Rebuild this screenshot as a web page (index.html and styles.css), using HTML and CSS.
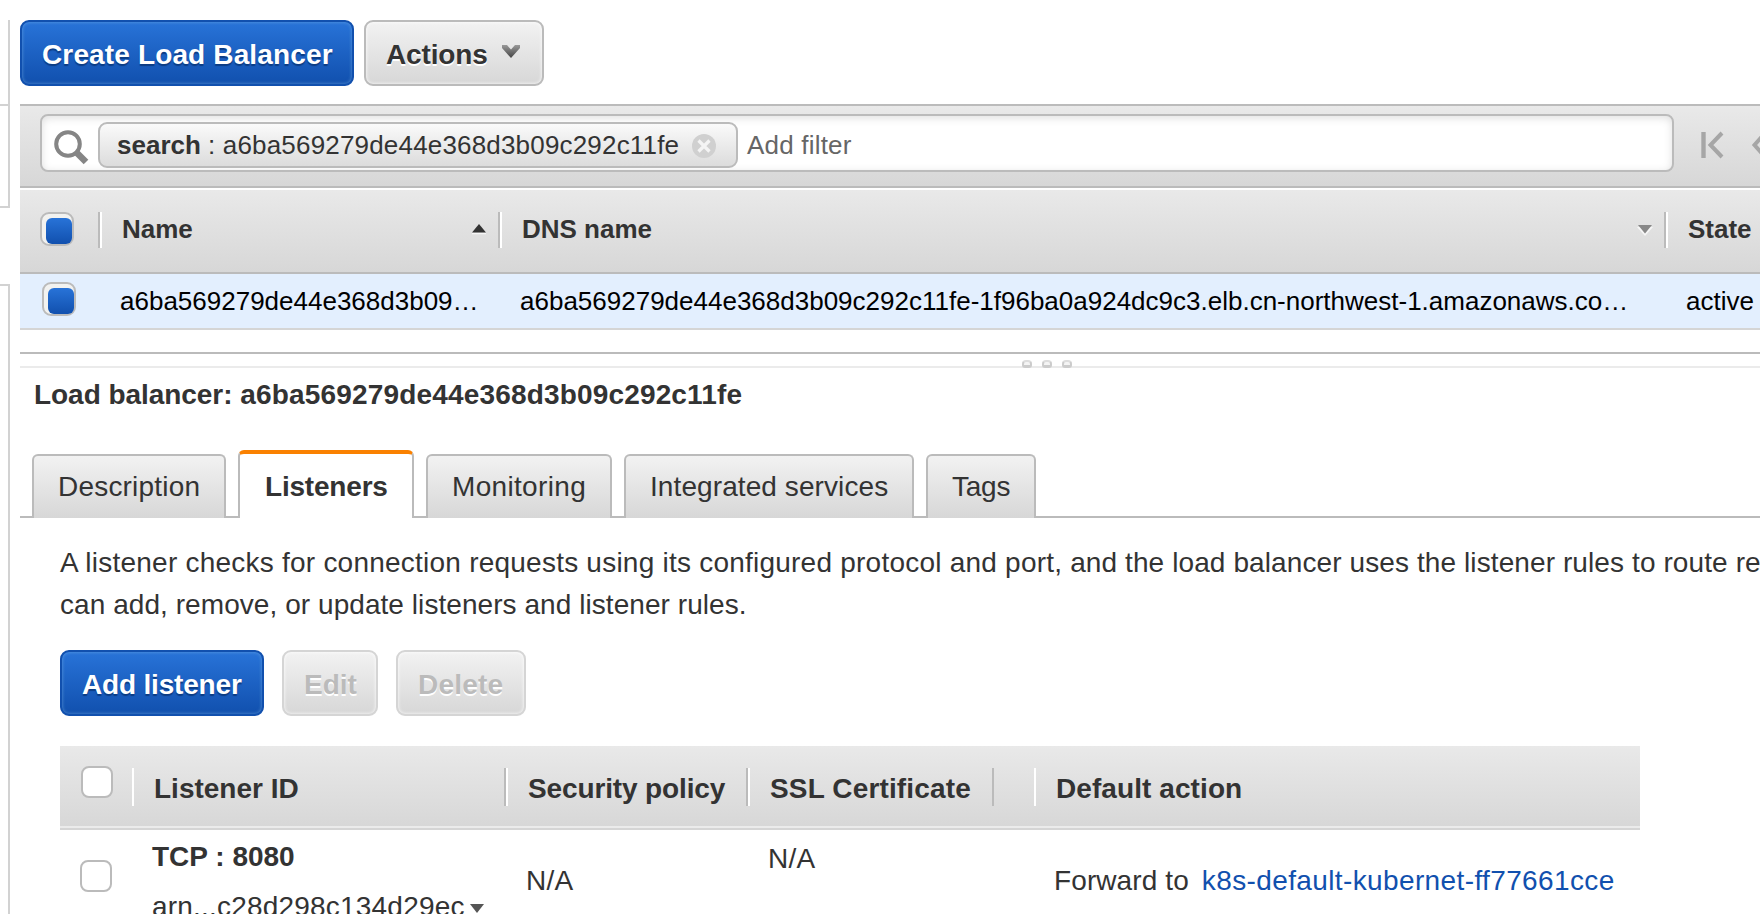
FILE: index.html
```html
<!DOCTYPE html>
<html lang="en">
<head>
<meta charset="utf-8">
<title>Load Balancers</title>
<link rel="stylesheet" href="styles.css">
</head>
<body>
<div class="app">
  <aside class="sidebar">
    <div class="side-top"></div>
    <div class="side-mid"></div>
    <div class="side-bottom"></div>
  </aside>
  <main class="main">
    <div class="actions">
      <button class="btn primary create"><span class="t">Create Load Balancer</span></button>
      <button class="btn menu"><span class="t">Actions</span>
        <svg class="chev" width="20" height="15" viewBox="0 0 20 15"><defs><linearGradient id="cg" x1="0" y1="0" x2="0" y2="1"><stop offset="0" stop-color="#999"/><stop offset="1" stop-color="#444"/></linearGradient></defs><path d="M1 1H6L10 5.5L14 1H19V4L10 14L1 4Z" fill="url(#cg)"/></svg>
      </button>
    </div>
    <div class="filterbar">
      <div class="searchbox">
        <svg class="lens" width="36" height="36" viewBox="0 0 36 36" fill="none" stroke="#858585"><circle cx="14" cy="14" r="11.8" stroke-width="4"/><path d="M22.5 22.5L32 32" stroke-width="6.5"/></svg>
        <div class="token"><span class="t key">search</span><span class="t val">: a6ba569279de44e368d3b09c292c11fe</span>
          <svg class="clear" width="24" height="24" viewBox="0 0 24 24"><circle cx="12" cy="12" r="12" fill="#d0d0d0"/><path d="M6.5 6.5L17.5 17.5M17.5 6.5L6.5 17.5" stroke="#f4f4f4" stroke-width="3.2"/></svg>
        </div>
        <span class="t hint">Add filter</span>
      </div>
      <svg class="pager" width="60" height="28" viewBox="0 0 60 28" fill="none" stroke="#a6a6a6"><path d="M2.5 1V27" stroke-width="4.4"/><path d="M21 2L9.500 14L21 26" stroke-width="4"/><path d="M65 1L53.500 14L65 27" stroke-width="4"/></svg>
    </div>
    <div class="grid-head">
      <div class="h-check"><span class="check on"></span></div>
      <div class="h-name"><span class="t">Name</span><svg width="16" height="12" viewBox="0 0 16 12"><path d="M1 10.500H15" stroke="#f6f6f6" stroke-width="1.500"/><path d="M8 1L15 9.500H1Z" fill="#333"/></svg></div>
      <div class="h-dns"><span class="t">DNS name</span><svg width="16" height="12" viewBox="0 0 16 12"><path d="M0 3H16L8 12Z" fill="#f6f6f6"/><path d="M1 1H15L8 9.500Z" fill="#888"/></svg></div>
      <div class="h-state"><span class="t">State</span></div>
    </div>
    <div class="grid-row">
      <span class="check on"></span>
      <span class="t r-name">a6ba569279de44e368d3b09…</span>
      <span class="t r-dns">a6ba569279de44e368d3b09c292c11fe-1f96ba0a924dc9c3.elb.cn-northwest-1.amazonaws.co…</span>
      <span class="t r-state">active</span>
    </div>
    <div class="splitter"><i></i><i></i><i></i></div>
    <h2 class="title"><span class="t label">Load balancer: </span><span class="t">a6ba569279de44e368d3b09c292c11fe</span></h2>
    <nav class="tabs">
      <a class="tab t1"><span class="t">Description</span></a>
      <a class="tab t2 active"><span class="t">Listeners</span></a>
      <a class="tab t3"><span class="t">Monitoring</span></a>
      <a class="tab t4"><span class="t">Integrated services</span></a>
      <a class="tab t5"><span class="t">Tags</span></a>
    </nav>
    <section class="panel">
      <p class="intro"><span class="t lead">A listener checks for connection requests using its configured protocol and port,</span><span class="t rest"> and the load balancer uses the listener rules to route requests</span><br><span class="t last">can add, remove, or update listeners and listener rules.</span></p>
      <div class="actions lower">
        <button class="btn primary add"><span class="t">Add listener</span></button>
        <button class="btn off edit"><span class="t">Edit</span></button>
        <button class="btn off delete"><span class="t">Delete</span></button>
      </div>
      <div class="cols l-head">
        <div class="l-check"><span class="check"></span></div>
        <div class="sep-l sep-r"><span class="t">Listener ID</span></div>
        <div class="sep-l sep-r h-pol"><span class="t">Security policy</span></div>
        <div class="sep-l sep-r h-ssl"><span class="t">SSL Certificate</span></div>
        <div></div>
        <div class="sep-l h-act"><span class="t">Default action</span></div>
      </div>
      <div class="cols l-row">
        <div class="l-check"><span class="check"></span></div>
        <div class="c-id"><b class="t">TCP : 8080</b><div class="arn"><span class="t">arn...c28d298c134d29ec</span><svg width="14" height="9" viewBox="0 0 14 9"><path d="M0 0H14L7 9Z" fill="#555"/></svg></div></div>
        <div class="c-pol"><span class="t">N/A</span></div>
        <div class="c-ssl"><span class="t">N/A</span></div>
        <div></div>
        <div class="c-act"><span class="t">Forward to</span><a class="t link">k8s-default-kubernet-ff77661cce</a></div>
      </div>
    </section>
  </main>
</div>
</body>
</html>
```

FILE: styles.css
```css
* { box-sizing: border-box; }
html, body { margin: 0; height: 914px; overflow: hidden; background: #fff; }
body { font: 28px/42px "Liberation Sans", Arial, sans-serif; color: #333; }
.t { white-space: pre; }
svg { display: block; flex: none; }
.app { display: flex; width: 1760px; height: 914px; padding-top: 20px; overflow: hidden; }
.sidebar { width: 10px; flex: none; margin-right: 10px; }
.side-top { height: 86px; border: solid #d2d2d2; border-width: 0 2px 2px 0; }
.side-mid { height: 102px; border: solid #d2d2d2; border-width: 0 2px 2px 0; }
.side-bottom { height: 640px; margin-top: 76px; border: solid #d2d2d2; border-width: 2px 2px 0 0; }
.main { width: 1740px; flex: none; }

.actions { display: flex; gap: 10px; height: 84px; }
.btn { display: flex; align-items: center; height: 66px; padding: 4px 0 0 20px; border: 2px solid #bbb; border-radius: 9px; font: bold 28px/42px "Liberation Sans", Arial, sans-serif; color: #333; text-shadow: 0 2px 0 #fff; background: linear-gradient(#f2f2f2, #d7d7d7); box-shadow: inset 0 0 3px 1px rgba(255,255,255,.6); }
.btn.primary { color: #fff; border-color: #1150ae; background: linear-gradient(#2873d8, #1150ae); text-shadow: 0 2px 1px #0c3c84; box-shadow: inset 0 0 3px 1px rgba(120,180,230,.4); }
.btn.off { color: #bbb; border-color: #d5d5d5; }
.create { width: 334px; letter-spacing: .14px; }
.menu { width: 180px; letter-spacing: -.16px; }
.chev { margin: -7px 0 0 13px; }

.filterbar { display: flex; height: 84px; padding: 8px 0 0 20px; border: solid #bbb; border-width: 2px 0; background: linear-gradient(#e9e9e9, #d7d7d7); }
.searchbox { display: flex; width: 1634px; height: 58px; flex: none; border: 2px solid #bbb; border-radius: 8px; background: #fff; box-shadow: inset 0 2px 8px rgba(0,0,0,.13); font-size: 26px; line-height: 42px; }
.lens { margin: 14px 8px 0 12px; }
.token { display: flex; width: 640px; height: 46px; margin-top: 6px; padding: 0 0 0 17px; border: 2px solid #bbb; border-radius: 9px; background: linear-gradient(#fafafa, #dcdcdc); }
.key { font-weight: bold; width: 91px; }
.val { letter-spacing: .18px; }
.clear { margin: 10px 0 0 13px; }
.hint { margin: 8px 0 0 9px; color: #666; letter-spacing: .2px; }
.pager { margin: 17px 0 0 27px; }

.grid-head { display: flex; height: 86px; border-top: 2px solid #fff; border-bottom: 2px solid #bbb; background: linear-gradient(#e9e9e9, #d7d7d7) padding-box; font-weight: bold; font-size: 26px; padding-top: 22px; }
.grid-head > div { display: flex; height: 36px; }
.grid-head > div + div { border-left: 2px solid #fff; padding: 0 11px 0 20px; justify-content: space-between; line-height: 35px; }
.h-check { width: 80px; padding-left: 20px; border-right: 2px solid #bbb; }
.h-name { width: 400px; border-right: 2px solid #bbb; }
.h-dns { width: 1166px; border-right: 2px solid #bbb; }
.h-state { width: 94px; }
.grid-head svg { margin-top: 11px; }
.h-dns svg { margin-top: 12px; }
.check { display: block; flex: none; width: 32px; height: 32px; border: 2px solid #bbb; border-radius: 8px; background: #fff; }
.check.on { width: 34px; height: 34px; padding: 4px 0 0 4px; border-radius: 9px; background: #f2f2f0; }
.check.on::before { content: ""; display: block; width: 26px; height: 26px; border-radius: 6px; background: linear-gradient(#2873d8, #1150ae); }
.grid-row { display: flex; height: 56px; padding: 8px 0 0 22px; border-bottom: 2px solid #d5d5d5; background: #e3effe; color: #000; font-size: 26px; line-height: 38px; }
.r-name { width: 400px; margin-left: 44px; }
.r-dns { width: 1166px; }
.splitter { display: flex; justify-content: center; gap: 10px; height: 16px; margin-top: 22px; padding: 6px 0 0 314px; border-top: 2px solid #bbb; border-bottom: 2px solid #ebebeb; }
.splitter i { width: 10px; height: 8px; border: 2px solid #ccc; border-top-color: #ddd; border-bottom-width: 3px; border-radius: 4px 4px 3px 3px; background: #f4f4f4; }
.title { margin: 6px 0 0 14px; height: 76px; font: bold 28px/42px "Liberation Sans", Arial, sans-serif; letter-spacing: .17px; }
.label { letter-spacing: -.05px; }

.tabs { display: flex; align-items: flex-end; gap: 12px; height: 68px; padding-left: 12px; background: linear-gradient(#bbb, #bbb) 0 100% / 100% 2px no-repeat; }
.tab { height: 64px; padding: 10px 0 0 24px; border: 2px solid #bbb; border-bottom: 0; border-radius: 6px 6px 0 0; background: linear-gradient(#f2f2f2, #d7d7d7); }
.tab.active { height: 68px; padding: 12px 0 0 25px; font-weight: bold; background: #fff; border-top: 4px solid #fa8100; }
.t1 { width: 194px; letter-spacing: .2px; }
.t2 { width: 176px; letter-spacing: -.2px; }
.t3 { width: 186px; letter-spacing: .33px; }
.t4 { width: 290px; letter-spacing: .09px; }
.t5 { width: 110px; letter-spacing: -.25px; }

.panel { padding: 24px 0 0 40px; }
.intro { margin: 0; height: 108px; white-space: nowrap; }
.lead { letter-spacing: .23px; }
.rest { letter-spacing: .1px; }
.last { letter-spacing: .06px; }
.lower { gap: 18px; height: 96px; }
.add { width: 204px; letter-spacing: -.18px; }
.edit { width: 96px; }
.delete { width: 130px; letter-spacing: .2px; }
.cols { display: grid; grid-template-columns: 72px 374px 242px 246px 40px 606px; width: 1580px; }
.l-head { height: 84px; padding-top: 22px; border-bottom: 2px solid #d5d5d5; background: linear-gradient(#ebebeb, #ebebeb) 0 100% / 100% 2px no-repeat, linear-gradient(#e9e9e9, #d7d7d7); font-weight: bold; }
.l-head > div { height: 38px; padding-left: 20px; line-height: 42px; }
.l-head > .l-check { padding-left: 21px; }
.sep-l { border-left: 2px solid #fff; }
.sep-r { border-right: 2px solid #bbb; }
.h-pol { letter-spacing: -.13px; }
.h-ssl { letter-spacing: .15px; }
.h-act { letter-spacing: .08px; }
.l-head .check { margin-top: -2px; }
.l-row { height: 84px; overflow: hidden; }
.l-row > div { padding-left: 20px; }
.l-row .check { margin-top: 30px; }
.l-row > .c-id { padding-top: 6px; }
.arn { display: flex; gap: 5px; padding-top: 8px; letter-spacing: .2px; }
.arn svg { margin-top: 18px; }
.l-row > .c-pol { padding-top: 30px; letter-spacing: .3px; }
.l-row > .c-ssl { padding-top: 8px; letter-spacing: .3px; }
.l-row > .c-act { display: flex; padding-top: 30px; letter-spacing: .1px; }
.link { margin-left: 13px; color: #1150ae; letter-spacing: .38px; }
```
